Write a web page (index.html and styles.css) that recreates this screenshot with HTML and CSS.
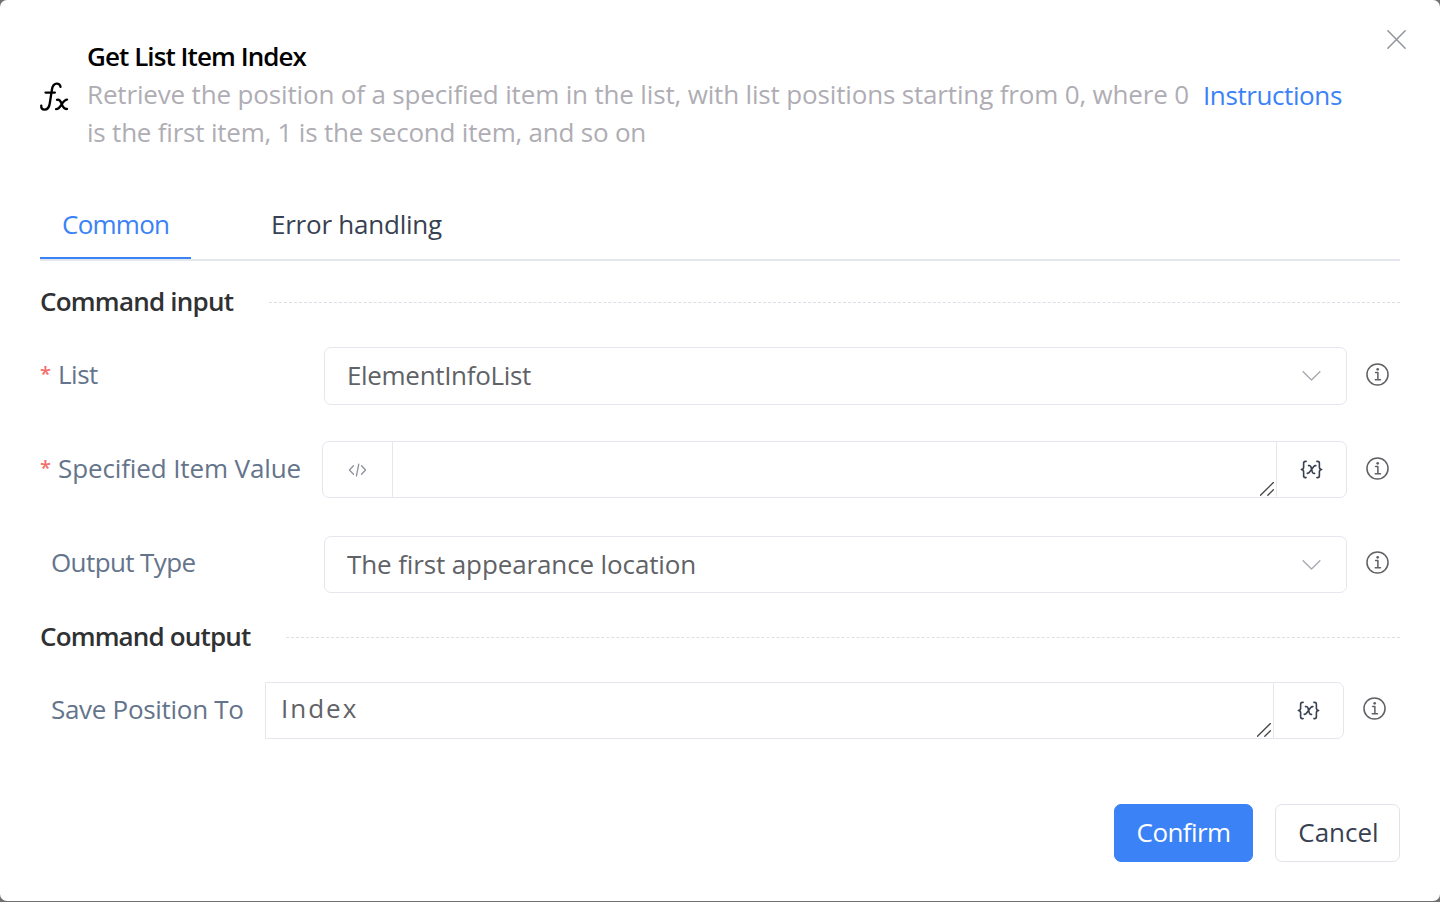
FILE: index.html
```
<!DOCTYPE html>
<html lang="en">
<head>
<meta charset="utf-8">
<title>Get List Item Index</title>
<link rel="stylesheet" href="styles.css">
</head>
<body>
<svg class="defs" aria-hidden="true">
  <symbol id="info" viewBox="0 0 24 24"><circle cx="12" cy="12" r="11"/><path d="M10 10h2.4v7.3M9.7 17.4h5.4"/><circle class="dot" cx="12.2" cy="6.6" r="1.4"/></symbol>
  <symbol id="chevron" viewBox="0 0 20 12"><path d="M1.2 1.4 10 10.2 18.8 1.4"/></symbol>
  <symbol id="grip" viewBox="0 0 14 14"><path d="M.5 13.2 13.4.5M7.8 13.2l5.6-5.4"/></symbol>
  <symbol id="variable" viewBox="0 0 24 20"><path d="M6.3 1.5H5.6Q3.7 1.5 3.7 3.4V7.6Q3.7 9.8 1.3 10 3.7 10.2 3.7 12.4V16.6Q3.7 18.5 5.6 18.5H6.3M17.7 1.5h.7q1.9 0 1.9 1.9v4.2q0 2.2 2.4 2.4-2.4.2-2.4 2.4v4.2q0 1.9-1.9 1.9h-.7M8.9 5.9q1.7-.5 2.4 1.1l1.6 5.6q.6 1.9 2.3 1.5M16.6 5.9q-1.2-.2-2.2.9L9.8 12.9q-.9 1.3-2.3 1.2"/></symbol>
</svg>
<main class="dialog">
  <button class="close" aria-label="Close"><svg viewBox="0 0 18 18"><path d="M.8.8l16.4 16.4M17.2.8.8 17.2"/></svg></button>
  <header class="header">
    <svg class="fx" viewBox="0 0 30 30"><path d="M21.2 5.1C21 2.4 18.8 1.4 16.8 1.7 14.2 2 12.9 4.3 12.3 8L10.1 22.2C9.5 26.2 8 28.5 4.7 28.5 2.3 28.5 1.1 27.2 1.3 24.6M5.7 10.9H15.4M17.6 18.4C20.7 17.5 21.3 20 22.4 22.5 23.5 25.5 24.5 28.4 27.9 27.9M28 18.2C25.7 18.2 24.3 20.2 22.5 22.8 20.7 25.7 19.4 28.1 16.6 28.1"/></svg>
    <div class="intro">
      <h1 class="title">Get List Item Index</h1>
      <p class="desc"><span class="desc-first">Retrieve the position of a specified item in the list, with list positions starting from 0, where 0</span><br><span class="desc-second">is the first item, 1 is the second item, and so on</span></p>
    </div>
    <a class="help">Instructions</a>
  </header>

  <nav class="tabs">
    <a class="tab active">Common</a>
    <a class="tab errors">Error handling</a>
  </nav>

  <section class="group">
    <h2 class="heading"><span class="heading-input">Command input</span></h2>
    <div class="row">
      <label class="label required"><span class="l-list">List</span></label>
      <div class="field select"><span class="v-list">ElementInfoList</span><svg class="chevron"><use href="#chevron"/></svg></div>
      <svg class="info"><use href="#info"/></svg>
    </div>
    <div class="row combo">
      <label class="label required"><span class="l-item">Specified Item Value</span></label>
      <div class="field">
        <span class="addon code"><svg viewBox="0 0 20 14"><path d="M5.8 2.5 1.5 7l4.3 4.5M14.2 2.5 18.5 7l-4.3 4.5M11.3.8 8.9 13.3"/></svg></span>
        <span class="area"><svg class="grip"><use href="#grip"/></svg></span>
        <span class="addon var"><svg><use href="#variable"/></svg></span>
      </div>
      <svg class="info"><use href="#info"/></svg>
    </div>
    <div class="row last">
      <label class="label"><span class="l-type">Output Type</span></label>
      <div class="field select"><span class="v-type">The first appearance location</span><svg class="chevron"><use href="#chevron"/></svg></div>
      <svg class="info"><use href="#info"/></svg>
    </div>
  </section>

  <section class="group output">
    <h2 class="heading"><span class="heading-output">Command output</span></h2>
    <div class="row combo save">
      <label class="label"><span class="l-save">Save Position To</span></label>
      <div class="field square">
        <span class="area"><span class="v-index">Index</span><svg class="grip"><use href="#grip"/></svg></span>
        <span class="addon var"><svg><use href="#variable"/></svg></span>
      </div>
      <svg class="info"><use href="#info"/></svg>
    </div>
  </section>

  <footer class="actions">
    <button class="btn primary">Confirm</button>
    <button class="btn cancel">Cancel</button>
  </footer>
</main>
</body>
</html>
```
FILE: styles.css
```
* { box-sizing: border-box; }
body {
  margin: 0;
  height: 902px;
  overflow: hidden;
  background: #707072;
  font-family: "Open Sans", "Noto Sans", sans-serif;
  font-size: 26px;
  line-height: 38px;
  white-space: nowrap;
}
svg { display: block; flex: none; fill: none; stroke: currentColor; stroke-linecap: round; stroke-linejoin: round; overflow: visible; }
.defs { position: absolute; width: 0; height: 0; }
h1, h2, p { margin: 0; font-size: inherit; }
button { font: inherit; }
.dialog {
  position: relative;
  height: 901px;
  padding: 37px 40px 0;
  border-radius: 7px;
  background: #fff;
}
.close { position: absolute; top: 30px; right: 34px; padding: 0; border: 0; background: none; color: #909399; }
.close svg { width: 19px; height: 19px; stroke-width: 1.4; }

.header { display: flex; align-items: center; height: 114px; }
.fx { width: 29px; height: 29px; margin-right: 18px; margin-top: 5px; color: #000; stroke-width: 2.4; }
.intro { width: 1102px; margin-right: 14px; }
.title { color: #000; font-weight: 600; letter-spacing: -0.93px; }
.desc { color: #afadb4; }
.desc-first { letter-spacing: -0.16px; }
.desc-second { letter-spacing: -0.21px; }
.help { margin-top: 2px; color: #3b82f6; letter-spacing: -0.4px; }

.tabs { display: flex; gap: 58px; height: 63px; margin-top: 47px; border-bottom: 2px solid #e4e7ed; }
.tab { height: 61px; padding: 7px 22px 0; color: #374151; }
.active { width: 151px; color: #3b82f6; border-bottom: 2px solid #3b82f6; letter-spacing: -0.75px; }
.errors { letter-spacing: -0.23px; }

.heading { display: flex; align-items: center; height: 38px; color: #303133; font-weight: 600; }
.heading span { padding-bottom: 2px; }
.heading-input { letter-spacing: -0.77px; }
.heading-output { letter-spacing: -0.84px; }
.group { padding-top: 22px; }
.output { padding-top: 25px; }
.heading::after { content: ""; flex: 1; margin-left: 36px; border-top: 1px dashed #dcdfe6; }
.row { display: flex; height: 58px; margin-top: 26px; }
.label { display: flex; align-items: center; width: 284px; height: 54px; padding-left: 11px; color: #64748b; }
.required { padding-left: 0; }
.required::before { content: "*"; width: 18px; color: #f56c6c; font-size: 20px; font-weight: 600; }
.l-list { letter-spacing: -0.5px; }
.l-item { letter-spacing: -0.12px; }
.l-type { letter-spacing: -0.6px; }
.l-save { letter-spacing: -0.3px; }
.v-list { letter-spacing: -0.33px; }
.v-type { letter-spacing: -0.12px; }
.field { display: flex; width: 1023px; border: 1px solid #e4e7ed; border-radius: 7px; color: #606266; }
.select { align-items: center; justify-content: space-between; padding: 0 25px 0 22px; }
.select span { padding-bottom: 2px; }
.chevron { width: 19px; height: 12px; color: #a8abb2; stroke-width: 1.5; }
.info { width: 23px; height: 23px; margin: 16px 0 0 19px; color: #606266; stroke-width: 1.6; }
.info .dot, .dot { fill: currentColor; stroke: none; }
.combo { height: 57px; margin-top: 36px; }
.combo .label { width: 282px; }
.combo .field { width: 1025px; }
.last { height: 57px; margin-top: 38px; }
.last .info { margin-top: 15px; }
.last .label { height: 52px; }
.addon { display: flex; align-items: center; justify-content: center; width: 70px; }
.code { border-right: 1px solid #e4e7ed; color: #909399; }
.code svg { width: 19px; height: 14px; stroke-width: 1.4; }
.var { border-left: 1px solid #e4e7ed; color: #374151; }
.var svg { width: 23px; height: 19px; stroke-width: 1.7; }
.area { display: flex; flex: 1; align-items: flex-end; justify-content: flex-end; padding: 0 2px 1px 15px; }
.grip { width: 14px; height: 14px; color: #444; stroke-width: 1.3; }
.combo.save { margin-top: 26px; }
.save .info { margin-top: 15px; }
.combo.save .label { width: 225px; }
.combo.save .field { width: 1079px; }
.square { border-radius: 0 7px 7px 0; }
.v-index { margin: 0 auto 10px 0; letter-spacing: 2px; }

.actions { display: flex; justify-content: flex-end; gap: 22px; margin-top: 65px; }
.btn { width: 125px; height: 58px; padding: 0 0 2px; border: 1px solid #e0e3e9; border-radius: 7px; background: #fff; color: #374151; }
.primary { width: 139px; border-color: #3b82f6; background: #3b82f6; color: #fff; letter-spacing: -0.6px; }
.cancel { padding-left: 2px; }
```
